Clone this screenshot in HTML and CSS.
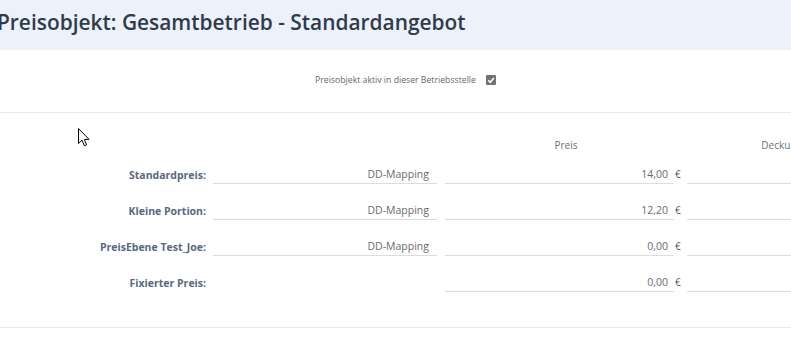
FILE: index.html
```html
<!DOCTYPE html>
<html lang="de">
<head>
<meta charset="utf-8">
<title>Preisobjekt</title>
<link rel="stylesheet" href="styles.css">
</head>
<body>
<div class="page">
  <header class="header">
    <h1 class="title">Preisobjekt: Gesamtbetrieb - Standardangebot</h1>
  </header>
  <div class="active-row">
    <span class="active-label">Preisobjekt aktiv in dieser Betriebsstelle</span>
    <span class="checkbox">
      <svg viewBox="0 0 10 10" width="10" height="10"><path d="M2.2 5.2 L4.2 7.2 L7.9 2.9" fill="none" stroke="#fff" stroke-width="1.6"/></svg>
    </span>
  </div>
  <section class="prices">
    <div class="grid">
      <div class="colhead col-empty"></div>
      <div class="colhead col-empty"></div>
      <div class="colhead col-preis">Preis</div>
      <div class="colhead col-deck">Deckungsbeitrag</div>

      <div class="label">Standardpreis:</div>
      <div class="field dd">DD-Mapping</div>
      <div class="field price">14,00</div>
      <div class="euro">€</div>
      <div class="field deck"></div>

      <div class="label">Kleine Portion:</div>
      <div class="field dd">DD-Mapping</div>
      <div class="field price">12,20</div>
      <div class="euro">€</div>
      <div class="field deck"></div>

      <div class="label">PreisEbene Test_Joe:</div>
      <div class="field dd">DD-Mapping</div>
      <div class="field price">0,00</div>
      <div class="euro">€</div>
      <div class="field deck"></div>

      <div class="label">Fixierter Preis:</div>
      <div class="field none"></div>
      <div class="field price">0,00</div>
      <div class="euro">€</div>
      <div class="field deck"></div>
    </div>
  </section>
  <svg class="cursor" width="12" height="19" viewBox="0 0 12 19"><path d="M0.5 0.5 L0.5 15.5 L4 12.2 L6.4 17.8 L8.6 16.8 L6.3 11.4 L11 11.4 Z" fill="#fff" stroke="#000" stroke-width="1" stroke-linejoin="miter"/></svg>
</div>
</body>
</html>
```
FILE: styles.css
```css
html, body {
  margin: 0;
  padding: 0;
  background: #fff;
  overflow: hidden;
}
body {
  font-family: "Open Sans", "Noto Sans", sans-serif;
  width: 791px;
  height: 338px;
}
.page {
  position: relative;
  width: 791px;
  height: 338px;
  overflow: hidden;
}
.header {
  height: 50px;
  background: #edf1f9;
  display: flex;
  align-items: center;
  padding-bottom: 6px;
  box-sizing: border-box;
}
.title {
  margin: 0 0 0 -3px;
  font-size: 20.9px;
  font-weight: 600;
  color: #2f3b4d;
  white-space: nowrap;
  letter-spacing: 0;
}
.active-row {
  height: 63px;
  box-sizing: border-box;
  border-bottom: 1px solid #e9e9e9;
  display: flex;
  align-items: center;
  justify-content: center;
  padding-left: 20px;
  padding-bottom: 3px;
  gap: 10px;
}
.active-label {
  font-size: 8.7px;
  color: #5f6672;
}
.checkbox {
  width: 10px;
  height: 10px;
  background: #737373;
  border-radius: 1px;
  display: flex;
}
.prices {
  height: 215px;
  box-sizing: border-box;
  border-bottom: 1px solid #e9e9e9;
}
.grid {
  display: grid;
  grid-template-columns: 213px 232px 229px 13px 241px;
  grid-template-rows: 53px repeat(4, 36px);
  width: 928px;
}
.colhead {
  padding-top: 25px;
  line-height: 14px;
  font-size: 10px;
  color: #6a717c;
  text-align: center;
  white-space: nowrap;
}
.col-preis {
  grid-column: 3 / span 2;
}
.col-deck {
  padding-right: 14px;
}
.label {
  height: 18px;
  line-height: 18px;
  padding-right: 7px;
  text-align: right;
  font-size: 10.5px;
  font-weight: 700;
  color: #5a6880;
  white-space: nowrap;
}
.field {
  height: 18px;
  line-height: 17px;
  box-sizing: border-box;
  border-bottom: 1px solid #dcdcdc;
  font-size: 10.5px;
  color: #6a6a6a;
  text-align: right;
}
.field.none {
  border-bottom: none;
}
.dd {
  margin-right: 8px;
  padding-right: 8px;
}
.price {
  padding-right: 6px;
  color: #666c75;
}
.euro {
  height: 18px;
  line-height: 17px;
  padding-left: 1px;
  font-size: 10px;
  color: #555;
}
.cursor {
  position: absolute;
  left: 78px;
  top: 128px;
}
```
